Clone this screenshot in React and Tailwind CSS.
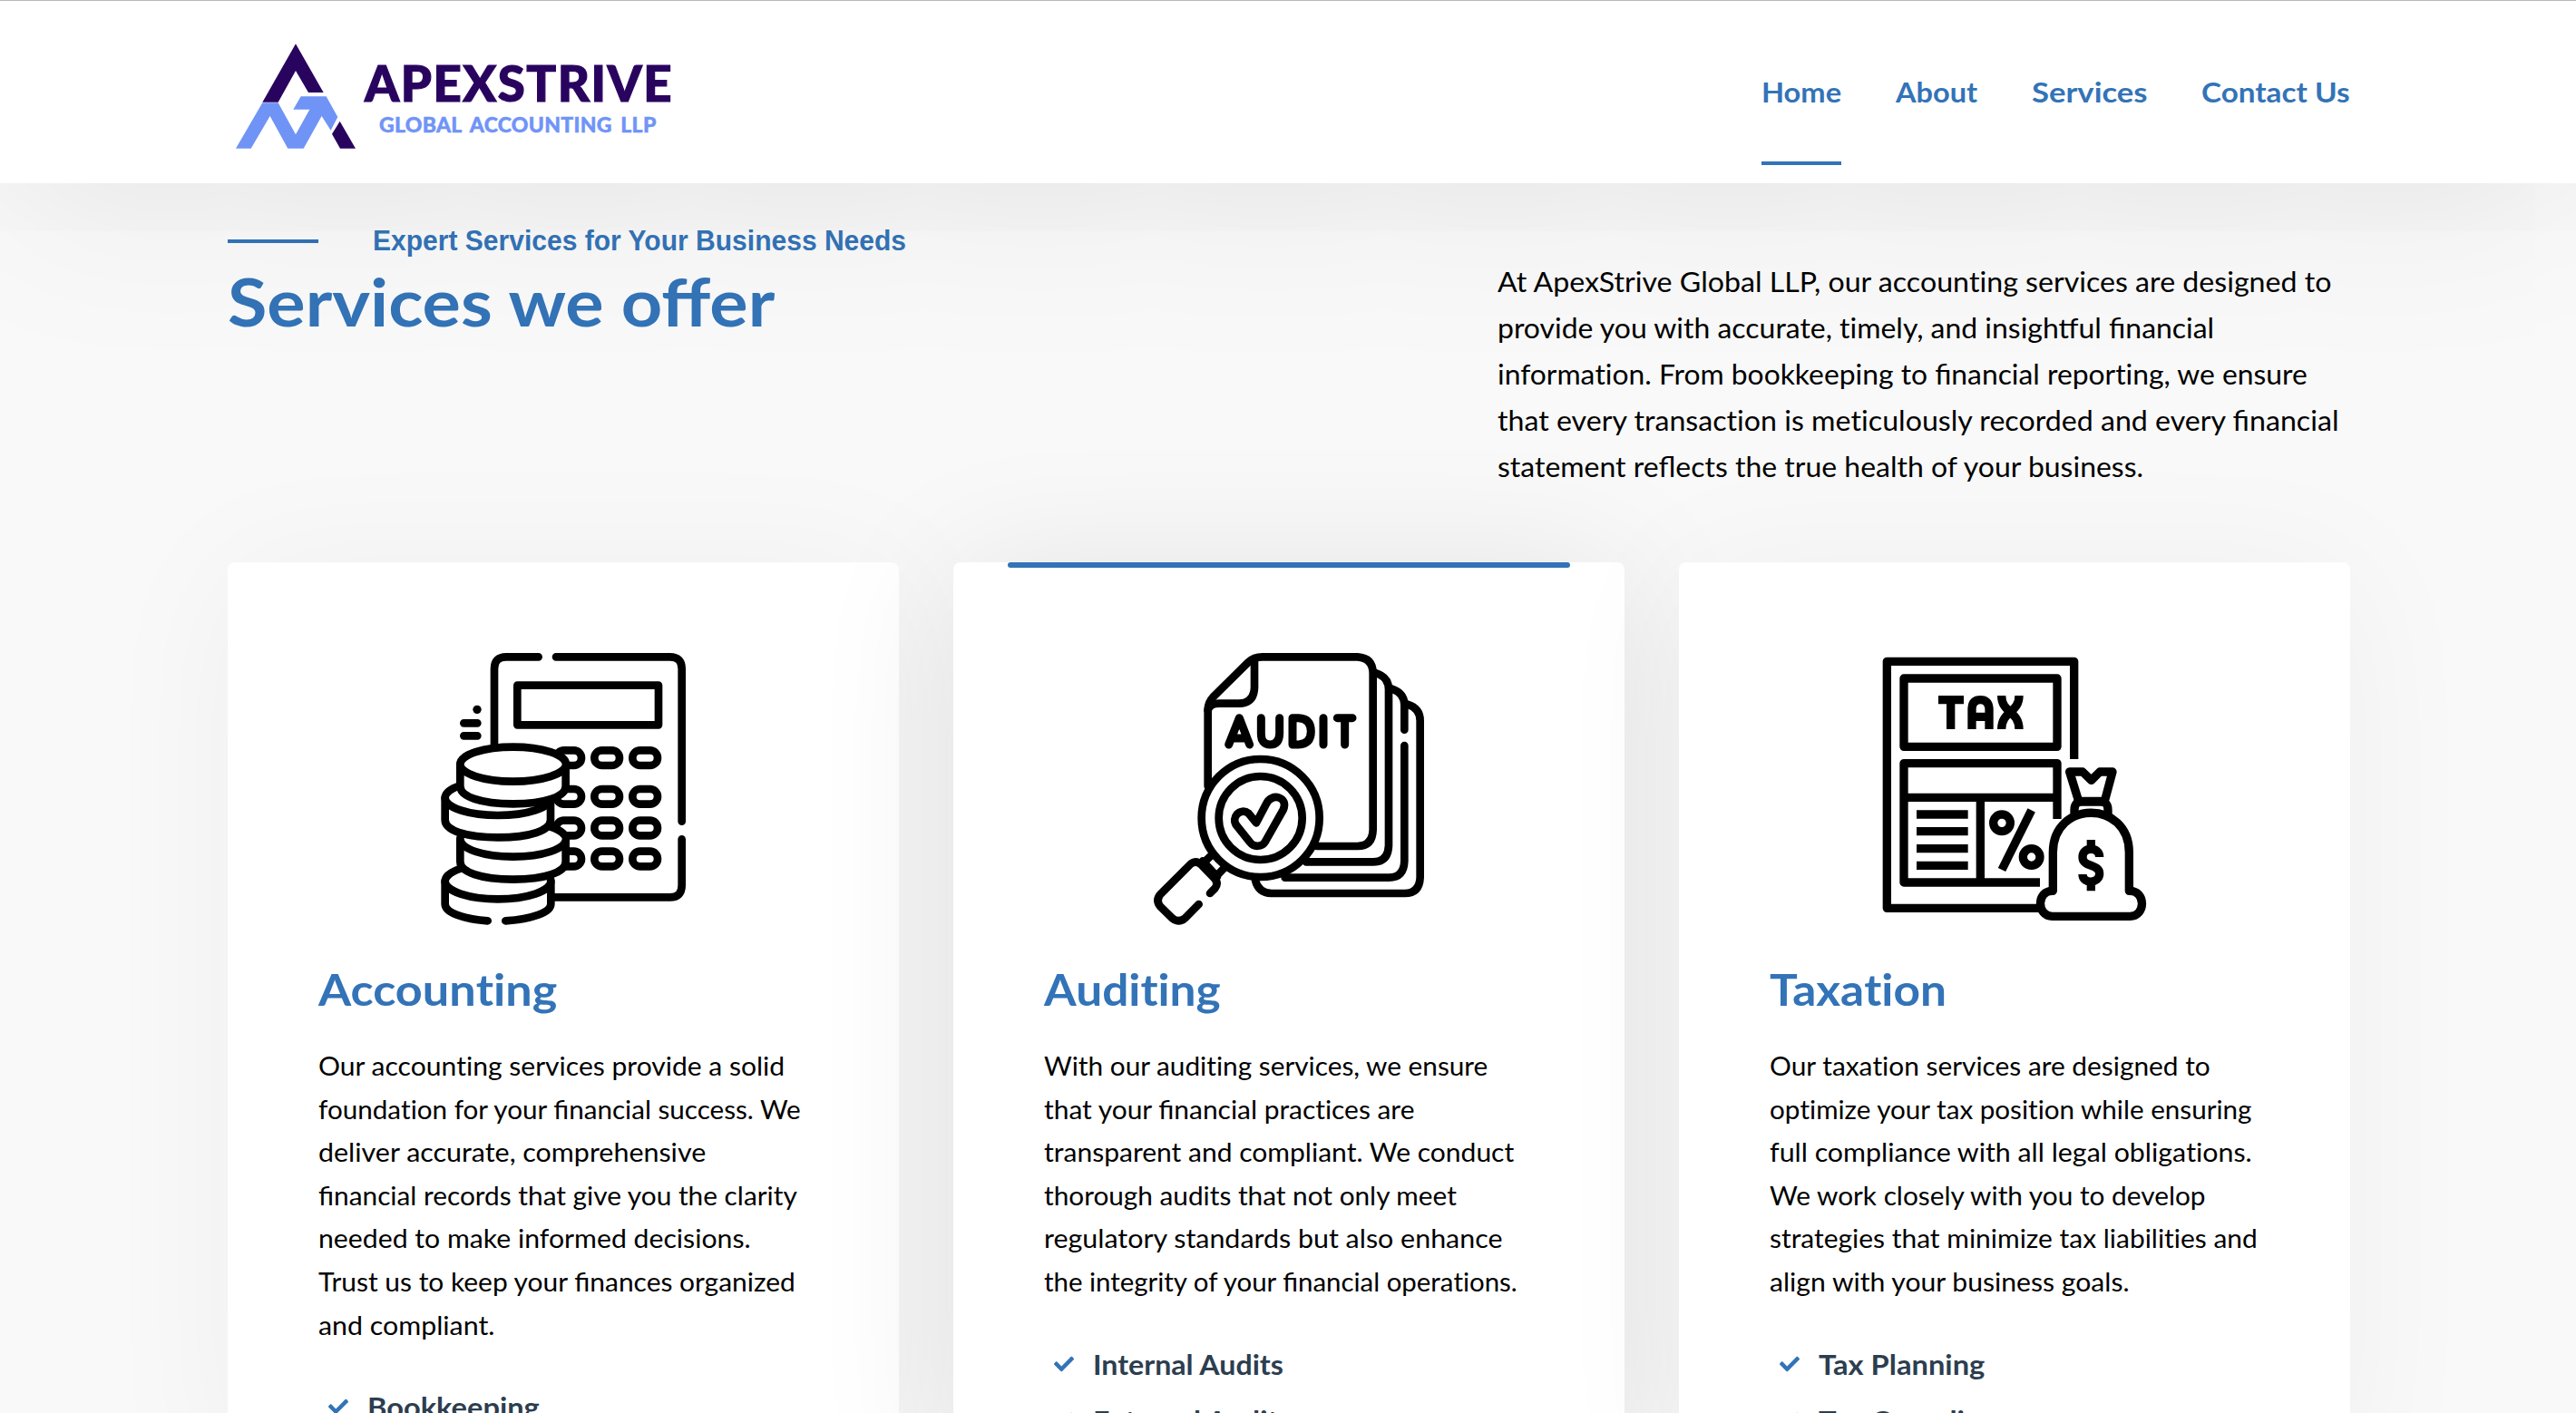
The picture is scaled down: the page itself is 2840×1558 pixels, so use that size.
import { useLayoutEffect, useRef, useState } from "react";
import { FaCheck } from "react-icons/fa";

// Single line of text, stretched so that it spans exactly `w` pixels.
// The "ti" pairs are kept as separate letters; "fi", "fl" and "ff" stay joined.
function Line({ w, children, className = "" }) {
  const ref = useRef(null);
  const [scale, setScale] = useState(1);
  useLayoutEffect(() => {
    setScale(w / ref.current.offsetWidth);
  }, [w]);
  return (
    <span className={"block whitespace-nowrap " + className} style={{ width: w + "px" }}>
      <span ref={ref} className="inline-block origin-left" style={{ transform: `scaleX(${scale})` }}>
        {children.split(/(ti)/).map((part, i) =>
          part === "ti" ? (
            <span key={i} className="[font-variant-ligatures:none]">{part}</span>
          ) : (
            part
          )
        )}
      </span>
    </span>
  );
}

function Logo() {
  return (
    <div className="flex items-start">
      <svg width="132" height="116" viewBox="60 54 396 346" className="mt-[47px] ml-[9px]">
        <path fill="#29045f" d="M258 54 350 215H300L258 143 200 247H148Z" />
        <path fill="#7094f6" d="M148 249H200L258 354 304 271H250L275 228H359L397 296 374 340 344 293 284 400H232L173 293 110 400H60Z" />
        <path fill="#29045f" d="M404 310 456 400H405L378 352Z" />
      </svg>
      <div className="flex flex-col">
        <Line w={340} className="mt-[60px] ml-[10px] text-[54.5px] leading-[60px] font-black tracking-[1.5px] text-[#29045f] [-webkit-text-stroke:1.2px_#29045f]">APEXSTRIVE</Line>
        <Line w={306} className="mt-[2px] ml-[26px] text-[23.5px] leading-[28px] font-black tracking-[0.3px] text-[#7094f6] [-webkit-text-stroke:0.5px_#7094f6] [word-spacing:4px]">GLOBAL ACCOUNTING LLP</Line>
      </div>
    </div>
  );
}

const nav = [
  ["Home", 88],
  ["About", 90],
  ["Services", 127],
  ["Contact Us", 164],
];

function AccountingIcon() {
  const keys = [407, 535, 639, 741];
  return (
    <svg width="300" height="300" viewBox="3 60 900 900" fill="none" stroke="#000" strokeWidth="26" strokeLinecap="round" strokeLinejoin="round">
      <path d="M225 365V112Q225 73 264 73H371M429 73H806Q845 73 845 112V617M845 676V829Q845 868 806 868H415" />
      <rect x="301" y="167" width="467" height="131" />
      <path d="M124 292H169M124 334H169" />
      <circle cx="168" cy="247" r="14" fill="#000" stroke="none" />
      {keys.map((y) => (
        <g key={y}>
          <rect x="430" y={y - 25} width="83" height="50" rx="25" />
          <rect x="556" y={y - 25} width="83" height="50" rx="25" />
          <rect x="682" y={y - 25} width="83" height="50" rx="25" />
        </g>
      ))}
      <path fill="#fff" stroke="none" d="M62 815V890C62 925 130 947 237 947S412 925 412 890V815Z" />
      <ellipse cx="237" cy="815" rx="175" ry="59" fill="#fff" />
      <path d="M62 815V890C62 918 120 940 203 946M412 815V890C412 918 350 940 262 946" />
      <path fill="#fff" d="M112 676V750C112 785 180 809 287 809S461 785 461 750V676Z" />
      <ellipse cx="287" cy="676" rx="175" ry="58" fill="#fff" />
      <path fill="#fff" d="M62 539V612C62 647 130 670 237 670S411 647 411 612V539Z" />
      <ellipse cx="237" cy="539" rx="175" ry="58" fill="#fff" />
      <path fill="#fff" d="M112 429V500C112 535 180 559 287 559S461 535 461 500V429Z" />
      <ellipse cx="287" cy="428" rx="175" ry="57" fill="#fff" />
    </svg>
  );
}

function AuditIcon() {
  return (
    <svg width="300" height="300" viewBox="63 60 900 900" fill="none" stroke="#000" strokeWidth="26" strokeLinecap="round" strokeLinejoin="round">
      <path d="M245 500V245Q247 222 262 206L378 91Q397 73 425 73H740Q791 76 791 128V645Q789 699 740 699H605" />
      <path d="M399 80V175Q397 226 348 227H282Q250 227 245 250" />
      <path d="M800 126Q843 140 843 180V697Q841 751 792 751H570" />
      <path d="M852 178Q895 192 895 232V314M895 366V749Q893 803 844 803H500" />
      <path d="M905 230Q947 243 947 284V802Q945 855 896 855H455Q412 853 402 812" />
      <g strokeWidth="27">
        <path d="M314 363 349 275 383 363M330 342H368" />
        <path d="M421 275V326Q421 363 451 363T482 326V275" />
        <path d="M525 275H545Q586 277 586 319T545 363H525Z" />
        <path d="M627 275V363M673 275H723M698 275V363" />
      </g>
      <circle cx="419" cy="606" r="195" fill="#fff" />
      <circle cx="419" cy="606" r="138" />
      <path d="M405 622 437 561C456 518 514 538 494 579L434 685C424 702 397 703 385 687L340 631C320 604 352 569 380 591Z" />
      <path d="M258 728 230 755M300 770 273 798M228 748 276 800" />
      <path d="M252 855 268 839Q282 822 266 805L224 761Q206 743 187 759L90 856Q70 877 88 899L127 937Q149 955 170 937L215 891" />
    </svg>
  );
}

function TaxIcon() {
  return (
    <svg width="300" height="300" viewBox="63 60 900 900" fill="none" stroke="#000" strokeWidth="28" strokeLinejoin="round">
      <path d="M710 411V88H91V904H600" />
      <rect x="147" y="144" width="507" height="226" />
      <path d="M654 609V425H147V819H597M147 538H654M400 538V819" />
      <path d="M189 594H359M189 650H359M189 707H359M189 763H359" />
      <path d="M261 215H345M302 215V312M372 312V243Q374 215 400 215T429 243V312M372 271H429M470 201C470 260 528 250 528 312M528 201C528 260 470 250 470 312" />
      <circle cx="471" cy="622" r="28" />
      <circle cx="569" cy="735" r="28" />
      <path d="M569 580 471 777" />
      <path fill="#fff" d="M725 550 695 453H738L767 481 795 453H837L811 550Z" />
      <path fill="#fff" d="M711 610V580Q711 552 735 552H798Q822 552 822 580V610" />
      <path fill="#fff" d="M640 847V720C640 545 892 545 892 720V847C948 844 948 931 895 931H638C585 931 585 844 640 847Z" />
      <path d="M794 735C794 700 738 700 738 735S794 757 794 790 738 826 738 792M766 678V708M766 818V847" />
    </svg>
  );
}

const intro = [
  ["At ApexStrive Global LLP, our accounting services are designed to", 919],
  ["provide you with accurate, timely, and insightful financial", 790],
  ["information. From bookkeeping to financial reporting, we ensure", 893],
  ["that every transaction is meticulously recorded and every financial", 927],
  ["statement reflects the true health of your business.", 712],
];

const cards = [
  {
    title: "Accounting",
    titleW: 263,
    Icon: AccountingIcon,
    shadow: "shadow-[0_10px_160px_rgba(0,0,0,0.047)]",
    text: [
      ["Our accounting services provide a solid", 514],
      ["foundation for your financial success. We", 532],
      ["deliver accurate, comprehensive", 427],
      ["financial records that give you the clarity", 528],
      ["needed to make informed decisions.", 477],
      ["Trust us to keep your finances organized", 526],
      ["and compliant.", 194],
    ],
    items: [["Bookkeeping", 190]],
  },
  {
    title: "Auditing",
    titleW: 195,
    Icon: AuditIcon,
    active: true,
    shadow: "shadow-[0_10px_160px_rgba(0,0,0,0.095)]",
    text: [
      ["With our auditing services, we ensure", 489],
      ["that your financial practices are", 408],
      ["transparent and compliant. We conduct", 518],
      ["thorough audits that not only meet", 455],
      ["regulatory standards but also enhance", 505],
      ["the integrity of your financial operations.", 522],
    ],
    items: [["Internal Audits", 210], ["External Audits", 218]],
  },
  {
    title: "Taxation",
    titleW: 195,
    Icon: TaxIcon,
    shadow: "shadow-[0_10px_160px_rgba(0,0,0,0.047)]",
    text: [
      ["Our taxation services are designed to", 486],
      ["optimize your tax position while ensuring", 532],
      ["full compliance with all legal obligations.", 532],
      ["We work closely with you to develop", 480],
      ["strategies that minimize tax liabilities and", 538],
      ["align with your business goals.", 397],
    ],
    items: [["Tax Planning", 183], ["Tax Compliance", 229]],
  },
];

function Card({ title, titleW, Icon, shadow, active, text, items }) {
  return (
    <article className={"relative flex h-[1000px] w-[740px] flex-col rounded-lg bg-white px-[100px] pt-[100px] " + shadow}>
      {active && <div className="absolute top-0 right-[60px] left-[60px] h-[6px] rounded-[3px] bg-[#3373b7]" />}
      <div className="flex justify-center"><Icon /></div>
      <h3 className="mt-[37px] text-[48px] leading-[68px] font-bold text-[#3373b7]">
        <Line w={titleW}>{title}</Line>
      </h3>
      <p className="mt-[27px] text-[28px] leading-[47.6px] text-black">
        {text.map(([t, w]) => <Line key={t} w={w}>{t}</Line>)}
      </p>
      <ul className="mt-[35px] flex flex-col text-[30px] leading-[62px] font-bold text-[#2c3e50]">
        {items.map(([t, w]) => (
          <li key={t} className="flex items-center">
            <FaCheck className="ml-[11px] size-[22px] text-[#3373b7]" />
            <Line w={w} className="ml-[21px]">{t}</Line>
          </li>
        ))}
      </ul>
    </article>
  );
}

export default function App() {
  return (
    <div className="flex h-[1558px] w-[2840px] flex-col overflow-hidden bg-[#f9f9f9] font-['Lato',sans-serif]">
      <header className="relative z-10 h-[202px] shrink-0 border-t border-[#b9b9b9] bg-white shadow-[0_0_220px_rgba(0,0,0,0.11)]">
        <div className="mx-auto flex h-full w-[2340px] translate-x-[1px] justify-between">
          <Logo />
          <nav className="flex gap-[60px] text-[30px] leading-[60px] font-bold text-[#3373b7]">
            {nav.map(([t, w], i) => (
              <a key={t} className={i === 0 ? "mt-[70px] h-[111px] border-b-4 border-[#3373b7]" : "mt-[70px]"}>
                <Line w={w}>{t}</Line>
              </a>
            ))}
          </nav>
        </div>
      </header>
      <main className="mx-auto w-[2340px] translate-x-[1px]">
        <section className="flex h-[418px] justify-between">
          <div>
            <div className="mt-[44px] flex items-center">
              <div className="h-1 w-[100px] bg-[#3373b7]" />
              <Line w={588} className="ml-[60px] font-['Liberation_Sans',sans-serif] text-[31px] leading-[40px] font-bold text-[#3373b7]">Expert Services for Your Business Needs</Line>
            </div>
            <h2 className="mt-[2px] text-[72px] leading-[88px] font-bold text-[#3373b7]">
              <Line w={603}>Services we offer</Line>
            </h2>
          </div>
          <p className="mt-[83px] w-[940px] text-[30px] leading-[51px] text-black">
            {intro.map(([t, w]) => <Line key={t} w={w}>{t}</Line>)}
          </p>
        </section>
        <section className="flex gap-[60px]">
          {cards.map((c) => <Card key={c.title} {...c} />)}
        </section>
      </main>
    </div>
  );
}
